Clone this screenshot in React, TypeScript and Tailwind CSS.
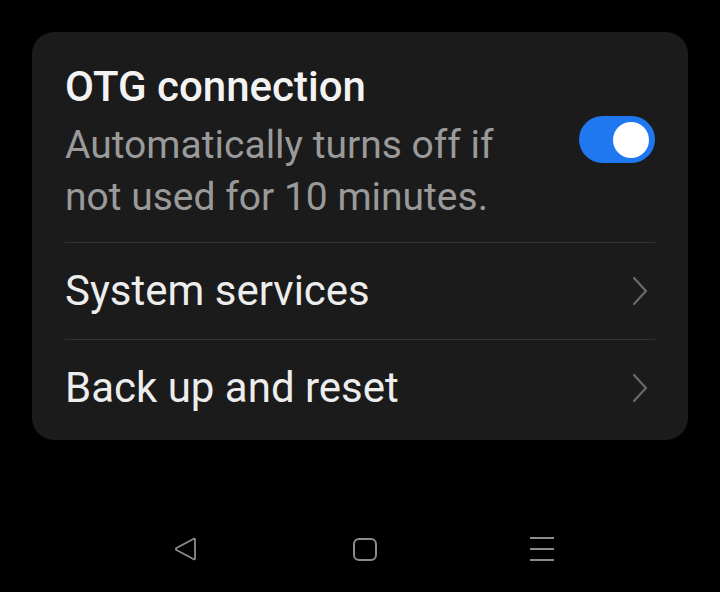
import React, { useState } from 'react';

const Chevron: React.FC = () => (
  <svg width="16" height="30" viewBox="0 0 16 30" className="mr-[7px]">
    <polyline points="2,2 14,15 2,28" fill="none" stroke="#6a6a6a" strokeWidth="2.2" strokeLinecap="round" strokeLinejoin="round" />
  </svg>
);

const Toggle: React.FC<{ on: boolean; onClick: () => void }> = ({ on, onClick }) => (
  <button
    onClick={onClick}
    className={`w-[76px] h-[47px] rounded-full flex items-center px-[6px] shrink-0 ${on ? 'bg-[#1f78ef] justify-end' : 'bg-[#555] justify-start'}`}
  >
    <span className="w-[36px] h-[36px] rounded-full bg-white block" />
  </button>
);

const Row: React.FC<{ label: string }> = ({ label }) => (
  <div className="h-[96px] flex items-center justify-between">
    <span className="text-[42px] leading-[50px] text-[#ededed]">{label}</span>
    <Chevron />
  </div>
);

export default function App() {
  const [otg, setOtg] = useState(true);

  return (
    <div className="w-[720px] h-[592px] bg-black flex flex-col px-[32px] pt-[32px]" style={{ fontFamily: 'Roboto, "Noto Sans", sans-serif' }}>
      <div className="bg-[#1b1b1b] rounded-[22px] px-[33px] pb-[4px]">
        {/* OTG */}
        <div className="flex items-center justify-between pt-[30px] pb-[19px]">
          <div className="w-[470px]">
            <div className="text-[42px] leading-[50px] font-medium text-[#f3f3f3]">OTG connection</div>
            <div className="mt-[7px] text-[39px] leading-[52px] text-[#9a9a9a]">
              Automatically turns off if not used for 10 minutes.
            </div>
          </div>
          <div className="mb-[6px]">
            <Toggle on={otg} onClick={() => setOtg(!otg)} />
          </div>
        </div>
        <div className="h-px bg-[#333333]" />
        <Row label="System services" />
        <div className="h-px bg-[#333333]" />
        <Row label="Back up and reset" />
      </div>

      {/* Nav bar */}
      <div className="flex items-center mt-[97px] pl-[141px]">
        <svg width="26" height="24" viewBox="0 0 26 24">
          <path d="M22 2.5 L22 21.5 Q22 22.8 20.8 22.2 L3.5 13 Q2.2 12 3.5 11 L20.8 1.8 Q22 1.2 22 2.5 Z" fill="none" stroke="#8c8c8c" strokeWidth="1.8" strokeLinejoin="round" />
        </svg>
        <div className="ml-[154px] w-[24px] h-[23px] rounded-[6px] border-[2px] border-[#8c8c8c]" />
        <div className="ml-[153px] w-[24px] flex flex-col gap-[9px]">
          <div className="h-[2px] bg-[#8c8c8c]" />
          <div className="h-[2px] bg-[#8c8c8c]" />
          <div className="h-[2px] bg-[#8c8c8c]" />
        </div>
      </div>
    </div>
  );
}
